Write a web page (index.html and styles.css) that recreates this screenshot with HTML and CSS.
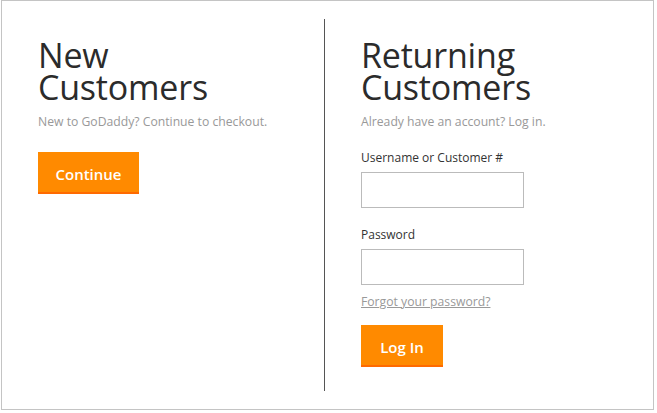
FILE: index.html
```html
<!DOCTYPE html>
<html>
<head>
<meta charset="utf-8">
<link rel="stylesheet" href="styles.css">
</head>
<body>
<div class="frame">
  <section class="col col-left">
    <h1 class="title">New<br>Customers</h1>
    <p class="sub">New to GoDaddy? Continue to checkout.</p>
    <button class="btn btn-continue">Continue</button>
  </section>
  <section class="col col-right">
    <h1 class="title">Returning<br>Customers</h1>
    <p class="sub">Already have an account? Log in.</p>
    <label class="label">Username or Customer #</label>
    <input class="field" type="text">
    <label class="label label-pw">Password</label>
    <input class="field" type="password">
    <a class="forgot" href="#">Forgot your password?</a>
    <button class="btn btn-login">Log In</button>
  </section>
</div>
</body>
</html>
```
FILE: styles.css
```css
html, body {
  margin: 0;
  padding: 0;
  background: #fff;
}
body {
  font-family: "Open Sans", "Noto Sans", sans-serif;
  color: #333;
}
.frame {
  margin-left: 1px;
  width: 653px;
  height: 410px;
  box-sizing: border-box;
  border: 1px solid #c4c4c4;
  padding: 18px 0;
  display: flex;
}
.col {
  display: flex;
  flex-direction: column;
  align-items: flex-start;
  padding-left: 36px;
  box-sizing: border-box;
}
.col-left {
  width: 323px;
  border-right: 1px solid #555;
}
.col-right {
  flex: 1;
}
.title {
  margin: 20px 0 0;
  font-size: 34px;
  line-height: 32px;
  font-weight: 400;
  color: #2b2b2b;
  letter-spacing: -0.2px;
}
.sub {
  margin: 10px 0 0;
  font-size: 12.2px;
  line-height: 18px;
  color: #999;
}
.btn {
  border: 0;
  border-bottom: 2px solid #ff6a00;
  background: #ff8a00;
  color: #fff;
  font-family: "Open Sans", "Noto Sans", sans-serif;
  font-weight: 600;
  font-size: 15px;
  height: 42px;
  padding: 3px 0 0;
  box-sizing: border-box;
  cursor: pointer;
}
.btn-continue {
  margin-top: 21px;
  width: 101px;
}
.label {
  margin-top: 18px;
  font-size: 12px;
  line-height: 18px;
  color: #333;
}
.field {
  margin-top: 5px;
  width: 163px;
  height: 36px;
  box-sizing: border-box;
  border: 1px solid #bbb;
  padding: 0 6px;
  font-size: 13px;
  outline: none;
}
.forgot {
  margin-top: 8px;
  font-size: 12.2px;
  line-height: 18px;
  color: #999;
  text-decoration: underline;
}
.btn-login {
  margin-top: 14px;
  width: 82px;
}
```
